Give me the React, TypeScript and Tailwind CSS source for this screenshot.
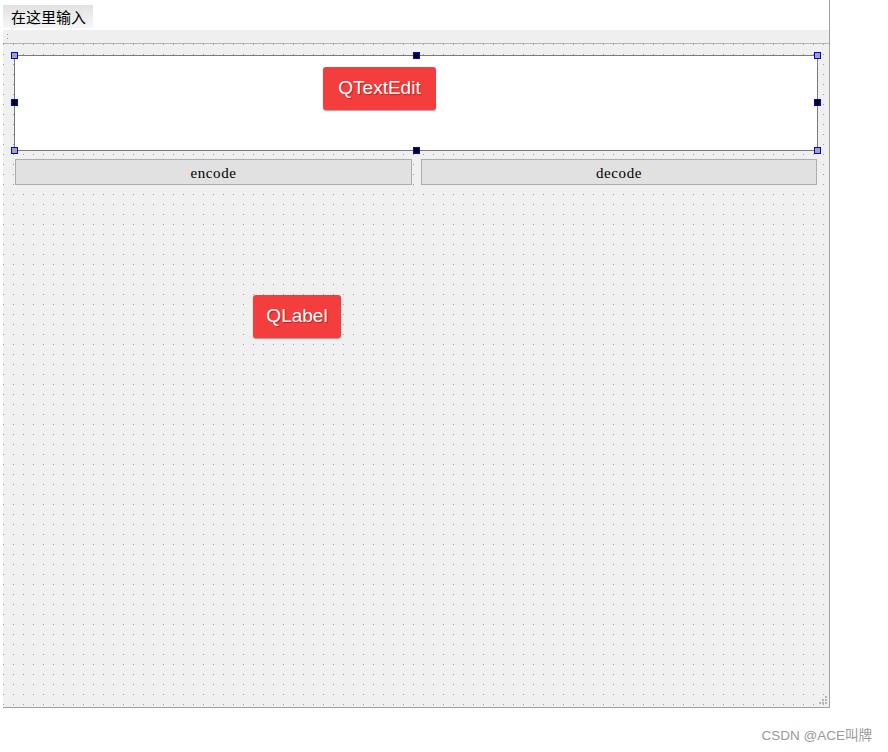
const dots =
  "bg-[conic-gradient(from_270deg_at_1px_1px,#9c9c9c_90deg,transparent_0)] bg-[length:10px_10px] bg-[position:0px_0px]";

function Handle({ className, dark }: { className: string; dark?: boolean }) {
  return (
    <span
      className={`absolute h-[7px] w-[7px] border border-[#0000ff] ${dark ? "bg-black" : "bg-[#a4a4a4]"} ${className}`}
    />
  );
}

function Badge({ text, className }: { text: string; className: string }) {
  return (
    <div
      className={`absolute flex items-center justify-center rounded-[3px] bg-[#f43e3e] font-['Liberation_Sans',Arial,sans-serif] text-[19px] text-white shadow-[0_1px_1px_rgba(0,0,0,0.35)] [text-shadow:1px_1px_1px_rgba(120,0,0,0.45)] ${className}`}
    >
      {text}
    </div>
  );
}

function FormButton({ label }: { label: string }) {
  return (
    <div className="flex h-[26px] items-center justify-center border border-[#adadad] bg-[#e1e1e1] pt-[2px] font-['Liberation_Serif',serif] text-[15px] font-normal tracking-[0.6px] text-black">
      {label}
    </div>
  );
}

export default function App() {
  return (
    <div className="h-[752px] w-[888px] bg-white font-['Liberation_Sans','Noto_Sans_CJK_SC',sans-serif]">
      <div className="ml-[3px] flex h-[708px] w-[827px] flex-col border-r border-b border-[#a0a0a0]">
        {/* menu bar */}
        <div className="h-[30px] bg-white pt-[5px]">
          <div className="inline-flex h-[23px] items-center bg-gradient-to-b from-[#e2e2e2] to-[#f6f6f6] pl-[8px] pr-[7px] font-['Noto_Sans_CJK_SC',sans-serif] text-[15px] leading-none text-black">
            在这里输入
          </div>
        </div>

        {/* toolbar */}
        <div className="flex h-[13px] items-start bg-[#efefef] pl-[4px] pt-[4px]">
          <div className="flex flex-col gap-[3px]">
            <span className="h-[1px] w-[1px] bg-[#9a9a9a]" />
            <span className="h-[1px] w-[1px] bg-[#9a9a9a]" />
          </div>
        </div>
        <div className="h-[1px] bg-[#b4b4b4]" />

        {/* central widget */}
        <div className={`relative flex-1 bg-[#f0f0f0] ${dots}`}>
          <div className="pl-[11px] pt-[11px]">
            <div className="relative h-[96px] w-[804px] border border-[#7a7a7a] bg-white">
              <Handle className="-left-[4px] -top-[4px]" />
              <Handle className="left-[398px] -top-[4px]" dark />
              <Handle className="-right-[4px] -top-[4px]" />
              <Handle className="-left-[4px] top-[43px]" dark />
              <Handle className="-right-[4px] top-[43px]" dark />
              <Handle className="-left-[4px] -bottom-[4px]" />
              <Handle className="left-[398px] -bottom-[4px]" dark />
              <Handle className="-right-[4px] -bottom-[4px]" />
            </div>
            <div className="mt-[8px] grid w-[804px] grid-cols-[397px_396px] gap-[9px] px-[1px]">
              <FormButton label="encode" />
              <FormButton label="decode" />
            </div>
          </div>

          <Badge text="QTextEdit" className="left-[320px] top-[23px] h-[43px] w-[113px]" />
          <Badge text="QLabel" className="left-[250px] top-[251px] h-[43px] w-[88px]" />

          {/* size grip */}
          <div className="absolute bottom-[3px] right-[2px] grid grid-cols-3 gap-[1px]">
            <span className="h-[2px] w-[2px]" />
            <span className="h-[2px] w-[2px]" />
            <span className="h-[2px] w-[2px] bg-[#b5b5b5]" />
            <span className="h-[2px] w-[2px]" />
            <span className="h-[2px] w-[2px] bg-[#b5b5b5]" />
            <span className="h-[2px] w-[2px] bg-[#b5b5b5]" />
            <span className="h-[2px] w-[2px] bg-[#b5b5b5]" />
            <span className="h-[2px] w-[2px] bg-[#b5b5b5]" />
            <span className="h-[2px] w-[2px] bg-[#b5b5b5]" />
          </div>
        </div>
      </div>

      <div className="mt-[20px] flex justify-end pr-[16px] text-[13.5px] leading-[16px] text-[#9a9a9a]">CSDN @ACE叫牌</div>
    </div>
  );
}
